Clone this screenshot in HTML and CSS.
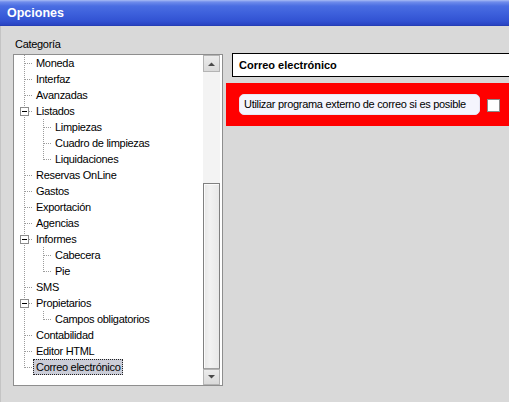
FILE: index.html
```html
<!DOCTYPE html>
<html lang="es">
<head>
<meta charset="utf-8">
<title>Opciones</title>
<link rel="stylesheet" href="styles.css">
</head>
<body>
<div class="window">
  <div class="titlebar">Opciones</div>
  <div class="content">
    <div class="left">
      <div class="label">Categoría</div>
      <div class="tree">
        <div class="items">
          <div class="row"><span class="ind t"></span><span class="txt">Moneda</span></div>
          <div class="row"><span class="ind t"></span><span class="txt">Interfaz</span></div>
          <div class="row"><span class="ind t"></span><span class="txt">Avanzadas</span></div>
          <div class="row"><span class="ind tx"><span class="box"></span></span><span class="txt">Listados</span></div>
          <div class="row"><span class="ind v"></span><span class="ind t"></span><span class="txt">Limpiezas</span></div>
          <div class="row"><span class="ind v"></span><span class="ind t"></span><span class="txt">Cuadro de limpiezas</span></div>
          <div class="row"><span class="ind v"></span><span class="ind e"></span><span class="txt">Liquidaciones</span></div>
          <div class="row"><span class="ind t"></span><span class="txt">Reservas OnLine</span></div>
          <div class="row"><span class="ind t"></span><span class="txt">Gastos</span></div>
          <div class="row"><span class="ind t"></span><span class="txt">Exportación</span></div>
          <div class="row"><span class="ind t"></span><span class="txt">Agencias</span></div>
          <div class="row"><span class="ind tx"><span class="box"></span></span><span class="txt">Informes</span></div>
          <div class="row"><span class="ind v"></span><span class="ind t"></span><span class="txt">Cabecera</span></div>
          <div class="row"><span class="ind v"></span><span class="ind e"></span><span class="txt">Pie</span></div>
          <div class="row"><span class="ind t"></span><span class="txt">SMS</span></div>
          <div class="row"><span class="ind tx"><span class="box"></span></span><span class="txt">Propietarios</span></div>
          <div class="row"><span class="ind v"></span><span class="ind e"></span><span class="txt">Campos obligatorios</span></div>
          <div class="row"><span class="ind t"></span><span class="txt">Contabilidad</span></div>
          <div class="row"><span class="ind t"></span><span class="txt">Editor HTML</span></div>
          <div class="row"><span class="ind e"></span><span class="txt selected">Correo electrónico</span></div>
        </div>
        <div class="scrollbar">
          <div class="sbtn up"><svg width="7" height="4" viewBox="0 0 7 4"><polygon points="0,4 3.5,0.5 7,4" fill="#4a4a4a"/></svg></div>
          <div class="track"></div>
          <div class="thumb"></div>
          <div class="sbtn down"><svg width="7" height="4" viewBox="0 0 7 4"><polygon points="0,0 7,0 3.5,3.5" fill="#4a4a4a"/></svg></div>
        </div>
      </div>
    </div>
    <div class="right">
      <div class="header">Correo electrónico</div>
      <div class="panel">
        <span class="pill">Utilizar programa externo de correo si es posible</span>
        <span class="check"></span>
      </div>
    </div>
  </div>
</div>
</body>
</html>
```

FILE: styles.css
```css
html, body {
  margin: 0;
  padding: 0;
}
body {
  width: 509px;
  height: 402px;
  overflow: hidden;
  background: #d9d9d9;
  font-family: "Liberation Sans", Arial, sans-serif;
  font-size: 11px;
  color: #000;
}
.window {
  width: 509px;
  height: 402px;
  display: flex;
  flex-direction: column;
}
.titlebar {
  height: 26px;
  line-height: 27px;
  padding-left: 7px;
  color: #fff;
  font-weight: bold;
  font-size: 12.5px;
  background: linear-gradient(to bottom, #a9bcf4 0px, #6f8cec 2px, #4a6de2 6px, #3c5fdb 14px, #3252d2 21px, #2944c2 25px, #2138aa 26px);
  flex: none;
}
.content {
  flex: 1;
  display: flex;
  padding-top: 11px;
  box-shadow: inset 1px 0 #c4c4c4;
}
.left {
  margin-left: 13px;
  width: 210px;
  flex: none;
  display: flex;
  flex-direction: column;
}
.label {
  height: 14px;
  line-height: 14px;
  padding-left: 2px;
  margin-bottom: 3px;
  letter-spacing: -0.3px;
}
.tree {
  width: 210px;
  height: 332px;
  box-sizing: border-box;
  border: 1px solid #8e8e8e;
  background: #fff;
  display: flex;
  padding-right: 2px;
}
.items {
  flex: 1;
  overflow: hidden;
  display: flex;
  flex-direction: column;
}
.row {
  height: 16px;
  display: flex;
  align-items: center;
  white-space: nowrap;
  flex: none;
}
.ind {
  width: 19px;
  height: 16px;
  flex: none;
  display: flex;
  align-items: center;
}
.ind.t {
  background:
    repeating-linear-gradient(to right, #9c9c9c 0 1px, transparent 1px 2px) 11px 8px / 8px 1px no-repeat,
    repeating-linear-gradient(to bottom, #9c9c9c 0 1px, transparent 1px 2px) 10px 0 / 1px 16px no-repeat;
}
.ind.e {
  background:
    repeating-linear-gradient(to right, #9c9c9c 0 1px, transparent 1px 2px) 11px 8px / 8px 1px no-repeat,
    repeating-linear-gradient(to bottom, #9c9c9c 0 1px, transparent 1px 2px) 10px 0 / 1px 9px no-repeat;
}
.ind.v {
  background:
    repeating-linear-gradient(to bottom, #9c9c9c 0 1px, transparent 1px 2px) 10px 0 / 1px 16px no-repeat;
}
.ind.tx {
  background:
    repeating-linear-gradient(to right, #9c9c9c 0 1px, transparent 1px 2px) 15px 8px / 4px 1px no-repeat,
    repeating-linear-gradient(to bottom, #9c9c9c 0 1px, transparent 1px 2px) 10px 0 / 1px 16px no-repeat;
}
.box {
  width: 9px;
  height: 9px;
  box-sizing: border-box;
  margin-left: 6px;
  margin-top: 1px;
  border: 1px solid #8c8c8c;
  background: #fff linear-gradient(#000, #000) center / 5px 1px no-repeat;
}
.txt {
  height: 16px;
  line-height: 15px;
  box-sizing: border-box;
  border: 1px dotted transparent;
  padding: 0 2px;
  letter-spacing: -0.3px;
}
.txt.selected {
  background: #cbcdd8;
  border-color: #222;
}
.scrollbar {
  width: 17px;
  flex: none;
  display: flex;
  flex-direction: column;
  background: #f3f3f3;
}
.sbtn {
  box-sizing: border-box;
  border: 1px solid #b4b4b4;
  background: linear-gradient(to bottom, #ececec, #dadada);
  display: flex;
  align-items: center;
  justify-content: center;
  flex: none;
}
.sbtn.up { height: 17px; }
.sbtn.down { height: 16px; }
.track {
  height: 111px;
  flex: none;
  background: #f3f3f3;
}
.thumb {
  height: 186px;
  flex: none;
  box-sizing: border-box;
  border: 1px solid #808080;
  border-bottom-color: #a0a0a0;
  background: linear-gradient(to right, #e6e6e6, #f2f2f2 40%, #e8e8e8);
  box-shadow: inset 1px 1px #fafafa;
}
.right {
  flex: 1;
  display: flex;
  flex-direction: column;
  margin-left: 3px;
  margin-right: -12px;
}
.header {
  margin-top: 16px;
  margin-left: 6px;
  height: 24px;
  box-sizing: border-box;
  border: 1px solid #000;
  background: #fff;
  font-weight: bold;
  line-height: 22px;
  padding-left: 6px;
}
.panel {
  margin-top: 6px;
  height: 43px;
  background: #ff0000;
  display: flex;
  align-items: flex-start;
  padding-left: 13px;
}
.pill {
  margin-top: 11px;
  width: 241px;
  height: 21px;
  box-sizing: border-box;
  border-radius: 5px;
  background: #f4f4fd;
  border: 1px solid #e6e6f4;
  line-height: 19px;
  padding-left: 4px;
  white-space: nowrap;
  letter-spacing: -0.3px;
}
.check {
  margin-top: 16px;
  margin-left: 7px;
  width: 13px;
  height: 13px;
  box-sizing: border-box;
  border: 1px solid #8a8a8a;
  background: #fff;
}
```
